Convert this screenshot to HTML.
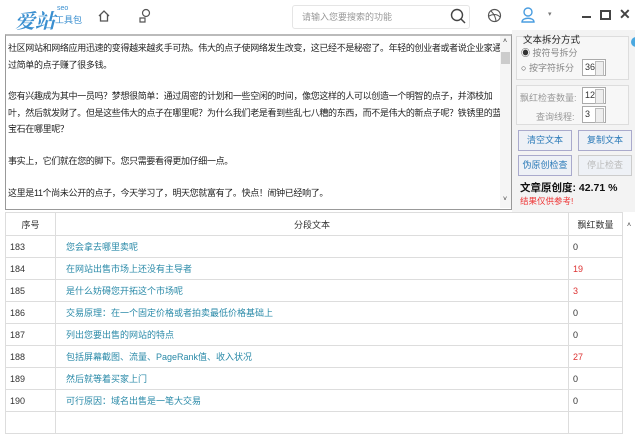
<!DOCTYPE html>
<html><head><meta charset="utf-8"><style>
*{margin:0;padding:0;box-sizing:border-box}
body{width:635px;height:410px;overflow:hidden;background:#fff;font-family:"Liberation Sans","Noto Sans CJK SC",sans-serif;font-size:9px;color:#333;position:relative}
.a{position:absolute;white-space:nowrap}
.ta{left:5px;top:34px;width:507px;height:176px;border:1px solid #999;border-top:2px solid #bbb;background:#fff}
.ta p{position:absolute;left:2px;white-space:nowrap;font-size:9px;color:#222;letter-spacing:-0.35px}
.rp{left:512px;top:30px;width:123px;height:182px;background:#f3f3f3}
.box{position:absolute;border:1px solid #ddd;background:#f7f7f7}
.spin{position:absolute;width:24px;height:17px;border:1px solid #aaa;background:#fff;font-size:9px;padding-left:2px;line-height:15px}
.spin:after{content:"";position:absolute;right:1px;top:1px;width:7px;height:13px;border:1px solid #bbb;background:#eee}
.btn{position:absolute;width:54px;height:21px;border:1px solid #aac;background:#eef1f6;color:#2a7ab8;font-size:9px;text-align:center;line-height:19px}
table{position:absolute;left:5px;top:212px;width:618px;border-collapse:collapse;font-size:9px}
td{border:1px solid #ddd;height:22px;padding-left:4px}
tr td:nth-child(2){color:#2a8aa8;padding-left:10px}
th{font-weight:normal;height:23px;border:1px solid #ddd;color:#333}
.r{color:#d33}
</style></head><body>
<div class="a" style="left:15px;top:5px;font-size:20px;color:#3a8fd0;font-style:italic;font-family:'Noto Serif CJK SC',serif;font-weight:bold">爱站</div>
<div class="a" style="left:57px;top:5px;font-size:7px;color:#3a8fd0">seo</div>
<div class="a" style="left:55px;top:13px;font-size:9px;color:#3a8fd0">工具包</div>
<svg class="a" style="left:97px;top:9px" width="14" height="14" viewBox="0 0 14 14"><path d="M2 7L7 2l5 5M3.5 6v6h7V6" fill="none" stroke="#555" stroke-width="1.3"/></svg>
<svg class="a" style="left:138px;top:8px" width="14" height="16" viewBox="0 0 14 16"><circle cx="8" cy="5" r="3.5" fill="none" stroke="#555" stroke-width="1.2"/><path d="M2 14v-4h5v4z" fill="none" stroke="#555" stroke-width="1.2"/></svg>
<div class="a" style="left:292px;top:5px;width:178px;height:24px;border:1px solid #e5e5e5;border-radius:3px;color:#999;font-size:9px;line-height:22px;padding-left:9px">请输入您要搜索的功能</div>
<svg class="a" style="left:450px;top:8px" width="16" height="16" viewBox="0 0 16 16"><circle cx="7" cy="7" r="5.5" fill="none" stroke="#444" stroke-width="1.4"/><path d="M11 11l4 4" stroke="#444" stroke-width="1.5"/></svg>
<svg class="a" style="left:487px;top:8px" width="15" height="15" viewBox="0 0 15 15"><circle cx="7.5" cy="7.5" r="6" fill="none" stroke="#555" stroke-width="1.2"/><path d="M4 3c3 3 5 7 5 11M2 8c4-2 8-2 11 1" fill="none" stroke="#555"/></svg>
<svg class="a" style="left:521px;top:6px" width="14" height="18" viewBox="0 0 14 18"><circle cx="7" cy="6" r="4" fill="none" stroke="#4a9de0" stroke-width="1.4"/><path d="M1 16c0-5 12-5 12 0z" fill="none" stroke="#4a9de0" stroke-width="1.4"/></svg>
<div class="a" style="left:548px;top:10px;font-size:7px;color:#777">▾</div>
<div class="a" style="left:582px;top:16px;width:9px;height:2px;background:#444"></div>
<div class="a" style="left:600px;top:10px;width:11px;height:10px;border:2px solid #444"></div>
<div class="a" style="left:619px;top:6px;font-size:14px;font-weight:bold;color:#444">✕</div>

<div class="a ta">
<p style="top:5px">社区网站和网络应用迅速的变得越来越炙手可热。伟大的点子使网络发生改变，这已经不是秘密了。年轻的创业者或者说企业家通</p>
<p style="top:22px">过简单的点子赚了很多钱。</p>
<p style="top:53px">您有兴趣成为其中一员吗？梦想很简单：通过周密的计划和一些空闲的时间，像您这样的人可以创造一个明智的点子，并添枝加</p>
<p style="top:70px">叶，然后就发财了。但是这些伟大的点子在哪里呢？为什么我们老是看到些乱七八糟的东西，而不是伟大的新点子呢？铁锈里的蓝</p>
<p style="top:86px">宝石在哪里呢？</p>
<p style="top:118px">事实上，它们就在您的脚下。您只需要看得更加仔细一点。</p>
<p style="top:150px">这里是11个尚未公开的点子，今天学习了，明天您就富有了。快点！闹钟已经响了。</p>
<div class="a" style="left:494px;top:0;width:11px;height:172px;background:#f5f5f5"></div>
<div class="a" style="left:497px;top:2px;font-size:7px">˄</div>
<div class="a" style="left:495px;top:16px;width:9px;height:12px;background:#ccc"></div>
<div class="a" style="left:497px;top:160px;font-size:7px">˅</div>
</div>

<div class="a rp">
<div class="box" style="left:4px;top:6px;width:113px;height:44px"></div>
<div class="a" style="left:11px;top:2px;font-size:9.5px;color:#222;background:#f3f3f3">文本拆分方式</div>
<div class="a" style="left:9px;top:16px;color:#888;font-size:9px"><span style="color:#333">◉</span> 按符号拆分</div>
<div class="a" style="left:9px;top:31px;color:#888;font-size:9px"><span style="color:#333">○</span> 按字符拆分</div>
<div class="spin" style="left:70px;top:29px">36</div>
<div class="box" style="left:4px;top:55px;width:113px;height:40px"></div>
<div class="a" style="left:8px;top:61px;color:#999">飘红检查数量:</div>
<div class="spin" style="left:70px;top:57px">12</div>
<div class="a" style="left:24px;top:80px;color:#999">查询线程:</div>
<div class="spin" style="left:70px;top:76px">3</div>
<div class="a" style="left:119px;top:7px;width:10px;height:10px;border-radius:50%;background:#4aa8e0"></div>
</div>
<div class="btn" style="left:518px;top:130px">清空文本</div>
<div class="btn" style="left:578px;top:130px">复制文本</div>
<div class="btn" style="left:518px;top:155px">伪原创检查</div>
<div class="btn" style="left:578px;top:155px;color:#bbb;border-color:#ccc">停止检查</div>
<div class="a" style="left:520px;top:180px;font-size:10.5px;font-weight:bold;color:#111">文章原创度: 42.71 %</div>
<div class="a" style="left:520px;top:195px;font-size:8.5px;color:#e33">结果仅供参考!</div>

<table>
<tr><th style="width:50px">序号</th><th>分段文本</th><th style="width:54px">飘红数量</th></tr>
<tr><td>183</td><td>您会拿去哪里卖呢</td><td>0</td></tr>
<tr><td>184</td><td>在网站出售市场上还没有主导者</td><td class="r">19</td></tr>
<tr><td>185</td><td>是什么妨碍您开拓这个市场呢</td><td class="r">3</td></tr>
<tr><td>186</td><td>交易原理：在一个固定价格或者拍卖最低价格基础上</td><td>0</td></tr>
<tr><td>187</td><td>列出您要出售的网站的特点</td><td>0</td></tr>
<tr><td>188</td><td>包括屏幕截图、流量、PageRank值、收入状况</td><td class="r">27</td></tr>
<tr><td>189</td><td>然后就等着买家上门</td><td>0</td></tr>
<tr><td>190</td><td>可行原因：域名出售是一笔大交易</td><td>0</td></tr>
<tr><td></td><td></td><td></td></tr>
</table>
<div class="a" style="left:627px;top:222px;font-size:7px">˄</div>
</body></html>
